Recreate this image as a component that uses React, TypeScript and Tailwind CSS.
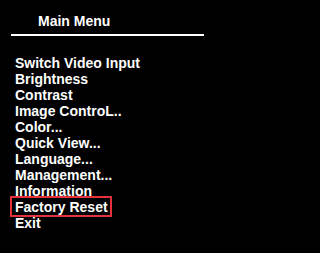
const items = [
  "Switch Video Input",
  "Brightness",
  "Contrast",
  "Image ControL..",
  "Color...",
  "Quick View...",
  "Language...",
  "Management...",
  "Information",
  "Factory Reset",
  "Exit",
];

const SELECTED = "Factory Reset";

export default function App() {
  return (
    <div className="min-h-screen w-full bg-black">
      <div
        className="w-[216px] h-[253px] bg-black text-white font-bold text-[14px] leading-4 overflow-hidden"
        style={{ fontFamily: '"Liberation Sans", Arial, sans-serif' }}
      >
        {/* Title */}
        <div className="pt-[13px] pl-[38px]">Main Menu</div>
        <div className="mt-[5px] ml-[11px] w-[193px] h-[2px] bg-white" />

        {/* Menu items */}
        <ul className="mt-[19px] pl-[15px]">
          {items.map((item) => (
            <li key={item} className="h-4 whitespace-nowrap">
              {item === SELECTED ? (
                <span className="relative inline-block">
                  {item}
                  <span className="absolute -left-[5px] -right-[4px] -top-[3px] -bottom-[2px] border-2 border-[#e3323b]" />
                </span>
              ) : (
                item
              )}
            </li>
          ))}
        </ul>
      </div>
    </div>
  );
}
